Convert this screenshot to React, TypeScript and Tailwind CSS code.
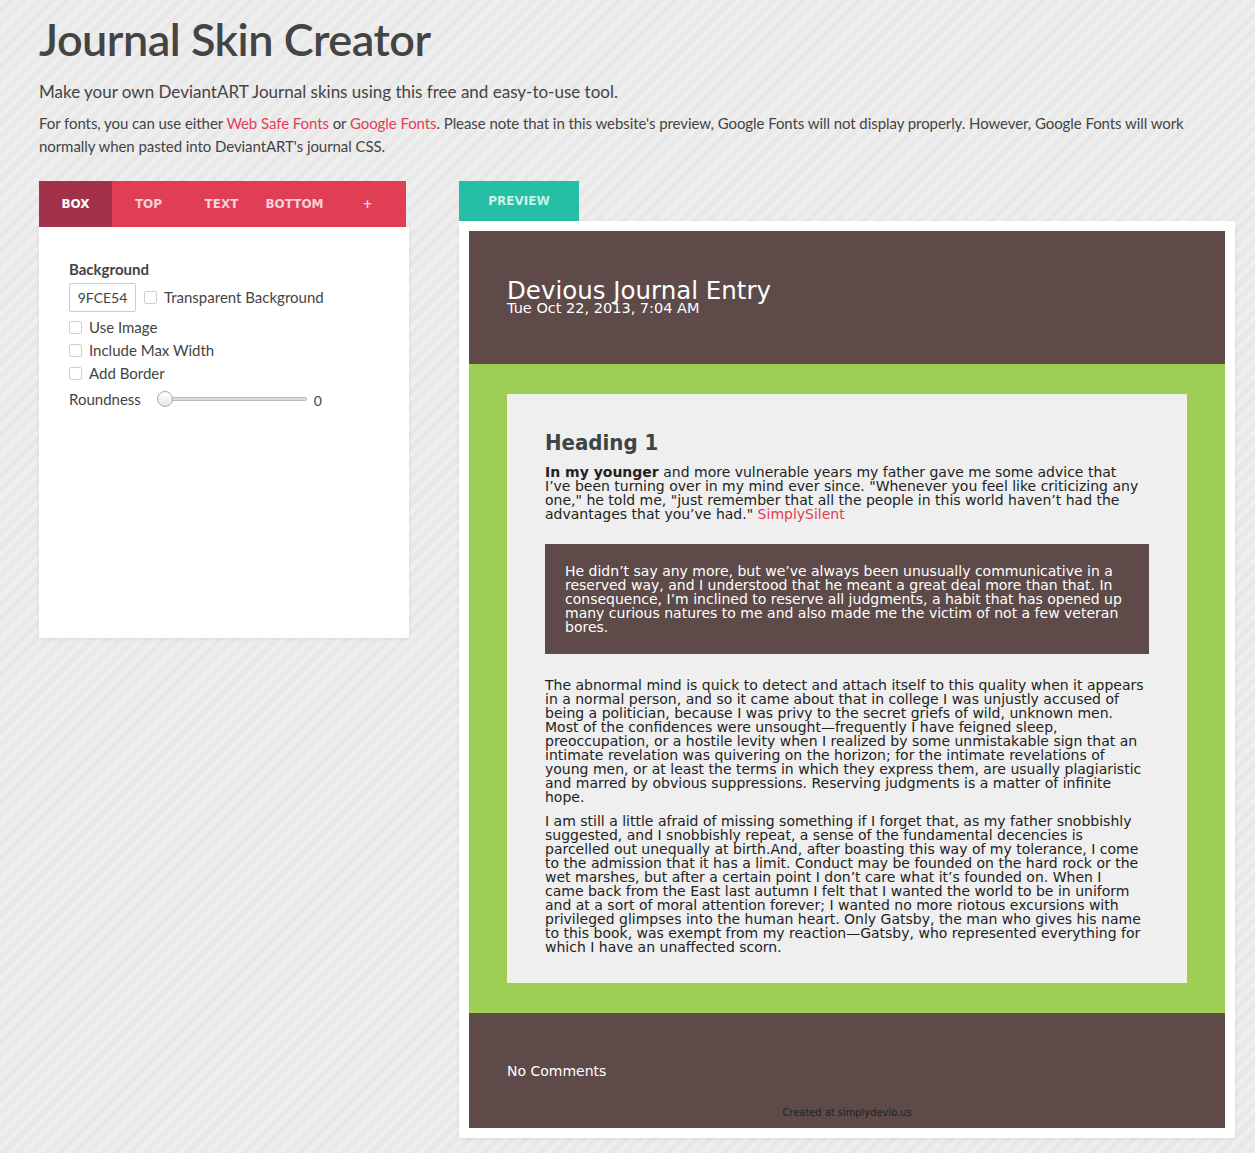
import React, { useState } from "react";

const tabs = ["Box", "Top", "Text", "Bottom", "+"];

const quoteLines = [
  "He didn’t say any more, but we’ve always been unusually communicative in a",
  "reserved way, and I understood that he meant a great deal more than that. In",
  "consequence, I’m inclined to reserve all judgments, a habit that has opened up",
  "many curious natures to me and also made me the victim of not a few veteran",
  "bores.",
];

const para2 = [
  "The abnormal mind is quick to detect and attach itself to this quality when it appears",
  "in a normal person, and so it came about that in college I was unjustly accused of",
  "being a politician, because I was privy to the secret griefs of wild, unknown men.",
  "Most of the confidences were unsought—frequently I have feigned sleep,",
  "preoccupation, or a hostile levity when I realized by some unmistakable sign that an",
  "intimate revelation was quivering on the horizon; for the intimate revelations of",
  "young men, or at least the terms in which they express them, are usually plagiaristic",
  "and marred by obvious suppressions. Reserving judgments is a matter of infinite",
  "hope.",
];

const para3 = [
  "I am still a little afraid of missing something if I forget that, as my father snobbishly",
  "suggested, and I snobbishly repeat, a sense of the fundamental decencies is",
  "parcelled out unequally at birth.And, after boasting this way of my tolerance, I come",
  "to the admission that it has a limit. Conduct may be founded on the hard rock or the",
  "wet marshes, but after a certain point I don’t care what it’s founded on. When I",
  "came back from the East last autumn I felt that I wanted the world to be in uniform",
  "and at a sort of moral attention forever; I wanted no more riotous excursions with",
  "privileged glimpses into the human heart. Only Gatsby, the man who gives his name",
  "to this book, was exempt from my reaction—Gatsby, who represented everything for",
  "which I have an unaffected scorn.",
];

const Lines: React.FC<{ lines: string[] }> = ({ lines }) => (
  <>
    {lines.map((l) => (
      <span key={l} className="block whitespace-nowrap">
        {l}
      </span>
    ))}
  </>
);

const Check: React.FC<{ label: string }> = ({ label }) => (
  <label className="flex items-center gap-[7px] text-[15px] leading-[23px] text-[#444]">
    <span className="h-[13px] w-[13px] rounded-[2px] border border-[#cfcfcf] bg-white" />
    {label}
  </label>
);

const App: React.FC = () => {
  const [active, setActive] = useState(0);

  return (
    <div className="min-h-screen bg-[repeating-linear-gradient(135deg,#eeeeee_0px,#eeeeee_5px,#e8e8e8_5px,#e8e8e8_10px)] pb-[14px] pl-[39px] pr-[20px] pt-[12px] font-['Lato',sans-serif] text-[#444]">
      <h1 className="text-[45px] font-semibold leading-[54px] tracking-[-0.5px] text-[#444]">
        Journal Skin Creator
      </h1>
      <p className="mt-[14px] text-[17px] leading-[24px]">
        Make your own DeviantART Journal skins using this free and easy-to-use tool.
      </p>
      <p className="mt-[8px] max-w-[1160px] text-[15px] leading-[23px] tracking-[-0.07px]">
        For fonts, you can use either <a className="text-[#e03e55]">Web Safe Fonts</a> or{" "}
        <a className="text-[#e03e55]">Google Fonts</a>. Please note that in this website's preview,
        Google Fonts will not display properly. However, Google Fonts will work normally when pasted
        into DeviantART's journal CSS.
      </p>

      <div className="mt-[23px] flex items-start gap-[50px]">
        {/* editor panel */}
        <div className="w-[370px] shrink-0">
          <div className="flex h-[46px] w-[367px] bg-[#e03e55] font-['DejaVu_Sans',sans-serif] text-[12px] font-bold">
            {tabs.map((t, i) => (
              <button
                key={t}
                type="button"
                onClick={() => setActive(i)}
                className={
                  i === active
                    ? "w-[73px] bg-[#a2324a] uppercase text-white"
                    : "w-[73px] uppercase text-[#fbd0d6]"
                }
              >
                {t}
              </button>
            ))}
          </div>
          <div className="h-[411px] bg-white px-[30px] pt-[31px] shadow-[0_1px_4px_rgba(0,0,0,0.08)]">
            <div className="text-[15px] font-bold leading-[22px] text-[#444]">Background</div>
            <div className="mt-[3px] flex items-center gap-[8px]">
              <div className="flex h-[29px] w-[67px] items-center justify-center rounded-[2px] border border-[#cccccc] text-[14px] text-[#444]">
                9FCE54
              </div>
              <Check label="Transparent Background" />
            </div>
            <div className="mt-[4px]">
              <Check label="Use Image" />
              <Check label="Include Max Width" />
              <Check label="Add Border" />
            </div>
            <div className="mt-[1px] flex items-center text-[15px] leading-[23px]">
              <span>Roundness</span>
              <div className="relative ml-[16px] flex h-[16px] w-[150px] items-center">
                <div className="h-[4px] w-full rounded-full border border-[#bbbbbb] bg-[#dddddd]" />
                <div className="absolute left-0 top-0 h-[16px] w-[16px] rounded-full border border-[#aaaaaa] bg-gradient-to-b from-white to-[#e6e6e6]" />
              </div>
              <span className="ml-[7px] mt-[3px] text-[14px]">0</span>
            </div>
          </div>
        </div>

        {/* preview */}
        <div className="min-w-0 flex-1">
          <div className="flex h-[40px] w-[120px] items-center justify-center bg-[#26bfa6] font-['DejaVu_Sans',sans-serif] text-[12px] font-bold text-[#c8f4e9]">
            PREVIEW
          </div>
          <div className="bg-white p-[10px] shadow-[0_1px_4px_rgba(0,0,0,0.08)]">
            <div className="h-[133px] bg-[#5e4a48] px-[38px] pt-[46px] font-['DejaVu_Sans',sans-serif] text-white">
              <div className="text-[24.5px] leading-[28px]">Devious Journal Entry</div>
              <div className="-mt-[5px] text-[14.5px] leading-[16px]">Tue Oct 22, 2013, 7:04 AM</div>
            </div>
            <div className="bg-[#9fce54] px-[38px] py-[30px]">
              <div className="h-[589px] overflow-hidden bg-[#efefef] px-[38px] pt-[33px] font-['DejaVu_Sans',sans-serif] text-[14px] leading-[14px] text-[#222]">
                <h2 className="font-['DejaVu_Sans_Condensed','DejaVu_Sans',sans-serif] text-[22px] font-bold leading-[32px] text-[#3b4447]">
                  Heading 1
                </h2>
                <p className="mt-[6px]">
                  <span className="block whitespace-nowrap">
                    <b>In my younger</b> and more vulnerable years my father gave me some advice that
                  </span>
                  <span className="block whitespace-nowrap">
                    I’ve been turning over in my mind ever since. "Whenever you feel like criticizing any
                  </span>
                  <span className="block whitespace-nowrap">
                    one," he told me, "just remember that all the people in this world haven’t had the
                  </span>
                  <span className="block whitespace-nowrap">
                    advantages that you’ve had." <a className="text-[#e03e55]">SimplySilent</a>
                  </span>
                </p>
                <blockquote className="mt-[23px] h-[110px] bg-[#5e4a48] px-[20px] pt-[20px] text-white">
                  <Lines lines={quoteLines} />
                </blockquote>
                <p className="mt-[24px]">
                  <Lines lines={para2} />
                </p>
                <p className="mt-[10px]">
                  <Lines lines={para3} />
                </p>
              </div>
            </div>
            <div className="h-[115px] bg-[#5e4a48] px-[38px] pt-[49px]">
              <div className="font-['DejaVu_Sans',sans-serif] text-[14px] leading-[18px] text-white">
                No Comments
              </div>
              <div className="mt-[27px] text-center font-['DejaVu_Sans_Condensed','DejaVu_Sans',sans-serif] text-[11px] leading-[12px] text-[#222]">
                Created at simplydevio.us
              </div>
            </div>
          </div>
        </div>
      </div>
    </div>
  );
};

export default App;
